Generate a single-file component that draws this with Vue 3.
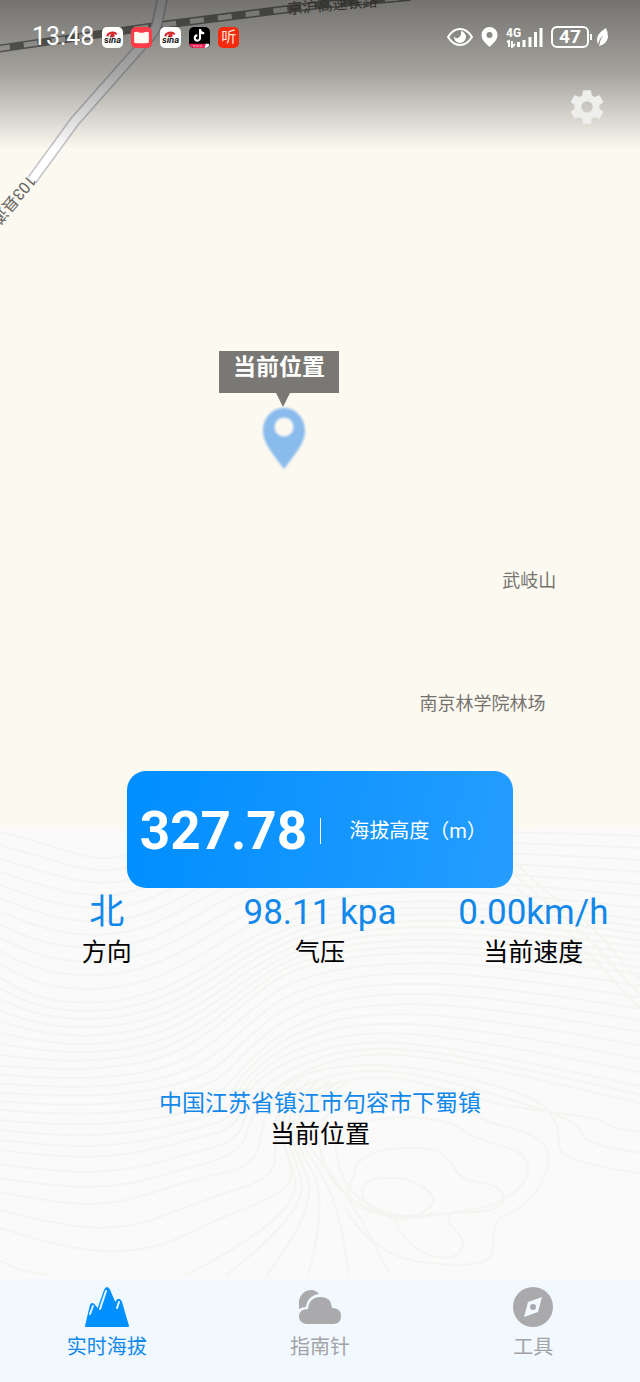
<template>
  <div class="page">
    <section class="map">
      <svg class="roads" width="640" height="240" viewBox="0 0 640 240" aria-hidden="true">
        <path class="rail" d="M-4 49 L170 24 L320 5 L410 -3" />
        <path class="rail-gap" d="M-4 49 L170 24 L320 5 L410 -3" />
        <path class="road-edge" d="M163 -4 L157 24 Q154 34 143 44 L75 121 L32 180" />
        <path class="road-fill" d="M163 -4 L157 24 Q154 34 143 44 L75 121 L32 180" />
        <text class="rail-name" transform="translate(288 14) rotate(-5)">京沪高速铁路</text>
        <text class="road-name" transform="translate(29 174) rotate(131)">103县道</text>
      </svg>

      <span class="place place-hill">武岐山</span>
      <span class="place place-farm">南京林学院林场</span>

      <div class="marker">
        <div class="callout">当前位置</div>
        <svg class="pin" width="46" height="66" viewBox="0 0 46 66" aria-hidden="true">
          <path fill-rule="evenodd" d="M23 2C11 2 2 12 2 25c0 12 9 22 21 38 12-16 21-26 21-38C44 12 35 2 23 2zm0 9.500a9.500 9.500 0 1 1 0 19 9.500 9.500 0 0 1 0-19z" />
        </svg>
      </div>

      <header class="top">
        <div class="status">
          <span class="time">13:48</span>
          <div class="apps">
            <span class="app sina">
              <svg width="21" height="21" viewBox="0 0 20 20" aria-hidden="true">
                <path d="M5 9a5 4 0 0 1 9-2" fill="none" stroke="#d8262c" stroke-width="2" />
                <circle cx="10" cy="8" r="2" fill="#d8262c" />
                <text x="10" y="15" text-anchor="middle" class="sina-name">sina</text>
              </svg>
            </span>
            <span class="app note">
              <svg width="21" height="21" viewBox="0 0 20 20" aria-hidden="true">
                <path d="M3 5q3-1 4 0 3 1 6 0 2-1 4 0v10q-7 1-14 0z" fill="#fffaf2" />
              </svg>
            </span>
            <span class="app sina">
              <svg width="21" height="21" viewBox="0 0 20 20" aria-hidden="true">
                <path d="M5 9a5 4 0 0 1 9-2" fill="none" stroke="#d8262c" stroke-width="2" />
                <circle cx="10" cy="8" r="2" fill="#d8262c" />
                <text x="10" y="15" text-anchor="middle" class="sina-name">sina</text>
              </svg>
            </span>
            <span class="app video">
              <svg width="21" height="21" viewBox="0 0 20 20" aria-hidden="true">
                <path d="M10.500 2v8.500a2.500 2.500 0 1 1-2.500-2.500M10.500 3q1 3 4 3" fill="none" stroke="#fff" stroke-width="2" />
                <path d="M0 16h17l-1 4H4q-3 0-4-4z" fill="#f0295c" />
                <path d="M4 18h9" stroke="#ffc4d4" stroke-width="1" stroke-dasharray="2 1" />
                <path d="M16 16h3v2l-2 2h-2z" fill="#fff" />
              </svg>
            </span>
            <span class="app listen">听</span>
          </div>

          <div class="signals">
            <svg width="26" height="20" viewBox="0 0 26 20" aria-hidden="true">
              <path d="M1 10Q6 2 13 2t12 8q-5 8-12 8T1 10z" fill="none" stroke="#fff" stroke-width="2" />
              <path fill="#fff" d="M14 4a6 6 0 1 1-7 5q1 3 4 2 4-2 3-7z" />
            </svg>
            <svg width="17" height="20" viewBox="0 0 17 20" aria-hidden="true">
              <path fill="#fff" fill-rule="evenodd" d="M8.500 0A8 8 0 0 0 .5 8c0 5 4 8 8 12 4-4 8-7 8-12a8 8 0 0 0-8-8zm0 5a3 3 0 1 1 0 6 3 3 0 0 1 0-6z" />
            </svg>
            <svg width="37" height="22" viewBox="0 0 37 22" aria-hidden="true">
              <text x="0" y="11" class="network">4G</text>
              <path d="M1 16l2-1v6M6 15v6l3-3" fill="none" stroke="#fff" stroke-width="2" />
              <path d="M12.500 16v5M18 14v7M24 11v10M29.500 6v15M35 2v19" stroke="#fff" stroke-width="3" />
            </svg>
            <span class="battery">47</span>
            <svg class="leaf" width="11" height="18" viewBox="0 0 11 18" aria-hidden="true">
              <path fill="#fff" d="M9 0C4 3 0 7 0 12q0 2 1 4 1-5 5-9-3 5-4 11 8-2 9-9 0-5-2-9z" />
            </svg>
          </div>
        </div>
        <button class="settings" type="button" aria-label="设置">
          <svg width="40" height="40" viewBox="0 0 24 24" aria-hidden="true">
            <path d="M19.430 12.980c.04-.32.07-.64.07-.98s-.03-.66-.07-.98l2.110-1.650c.19-.15.24-.42.12-.64l-2-3.460c-.12-.22-.39-.3-.61-.22l-2.490 1c-.52-.4-1.080-.73-1.690-.98l-.38-2.650A.49.49 0 0 0 14 2h-4c-.25 0-.46.18-.49.42l-.38 2.650c-.61.25-1.170.59-1.690.98l-2.490-1c-.23-.09-.49 0-.61.22l-2 3.460c-.13.22-.07.49.12.64l2.110 1.650c-.04.32-.07.65-.07.98s.03.66.07.98l-2.110 1.650c-.19.15-.24.42-.12.64l2 3.460c.12.22.39.3.61.22l2.490-1c.52.4 1.080.73 1.690.98l.38 2.650c.03.24.24.42.49.42h4c.25 0 .46-.18.49-.42l.38-2.650c.61-.25 1.170-.59 1.690-.98l2.490 1c.23.09.49 0 .61-.22l2-3.460c.12-.22.07-.49-.12-.64l-2.110-1.650zM12 15.500a3.500 3.500 0 1 1 0-7 3.500 3.500 0 0 1 0 7z" />
          </svg>
        </button>
      </header>
    </section>

    <main class="panel">
      <svg class="contours" viewBox="0 0 640 451" preserveAspectRatio="none" aria-hidden="true">
        <path v-for="(d, i) in contours" :key="i" :d="d" />
      </svg>

      <div class="altitude">
        <strong>327.78</strong>
        <span class="unit">海拔高度（m）</span>
      </div>

      <div class="stats">
        <div v-for="stat in stats" :key="stat.label" class="stat">
          <span class="value">{{ stat.value }}</span>
          <span class="label">{{ stat.label }}</span>
        </div>
      </div>

      <div class="address">
        <span class="address-name">中国江苏省镇江市句容市下蜀镇</span>
        <span class="label">当前位置</span>
      </div>
    </main>

    <nav class="tabs">
      <button
        v-for="tab in tabs"
        :key="tab.id"
        type="button"
        :class="{ active: activeTab === tab.id }"
        @click="activeTab = tab.id"
      >
        <svg v-if="tab.id === 'altitude'" width="46" height="42" viewBox="0 0 46 42" aria-hidden="true">
          <path class="peak" d="M2 40 L7 19 Q8 17 10 19 L14 24 L21 4 Q23 0 25 4 L31 18 L33 15 Q35 12 37 16 L44 40 Z" />
          <path class="snow" d="M9 20L6 28M22 5l-6 18M35 16l-2 6" />
        </svg>
        <svg v-else-if="tab.id === 'compass'" width="42" height="42" viewBox="0 0 42 42" aria-hidden="true">
          <path d="M0 23C-2 12 4 4 12 4q5 0 8 4C12 9 8 14 7 21q-4 0-7 2z" />
          <path d="M8 38a8 7 0 0 1-8-7q0-8 9-8 1-12 13-12 10 0 11 11 9 0 9 8t-8 8z" />
        </svg>
        <svg v-else width="40" height="42" viewBox="0 0 40 42" aria-hidden="true">
          <path fill-rule="evenodd" d="M20 1a20 20 0 1 1 0 40 20 20 0 0 1 0-40zM29 11L15 16l-4 15 14-5z" />
          <circle cx="20" cy="21" r="3" />
        </svg>
        <span>{{ tab.name }}</span>
      </button>
    </nav>
  </div>
</template>

<script setup>
import { ref } from 'vue';

const activeTab = ref('altitude');

const tabs = [
  { id: 'altitude', name: '实时海拔' },
  { id: 'compass', name: '指南针' },
  { id: 'tools', name: '工具' },
];

const stats = [
  { value: '北', label: '方向' },
  { value: '98.11 kpa', label: '气压' },
  { value: '0.00km/h', label: '当前速度' },
];

// Key contour lines, the ones in between are interpolated
const slopes = [
  [[0, 4], [40, 14], [75, 26], [105, 32], [140, 24], [170, 10], [230, -10], [330, -30], [450, -40], [640, -40]],
  [[0, 149], [29, 170], [102, 177], [163, 162], [212, 135], [260, 103], [330, 78], [420, 72], [520, 76], [640, 92]],
  [[0, 238], [45, 241], [100, 241], [160, 232], [205, 208], [245, 175], [290, 140], [380, 124], [500, 126], [640, 146]],
  [[0, 282], [50, 286], [120, 285], [180, 277], [225, 262], [245, 236], [290, 198], [360, 175], [490, 178], [640, 204]],
  [[0, 322], [60, 330], [130, 327], [190, 312], [238, 299], [245, 262], [290, 230], [370, 210], [490, 226], [640, 258]],
  [[0, 364], [60, 374], [120, 374], [180, 356], [244, 338], [256, 292], [290, 256], [370, 226], [500, 248], [640, 284]],
];
const counts = [11, 8, 5, 4, 3];

function smooth(points) {
  let d = `M${points[0][0]} ${points[0][1]}`;
  for (let i = 1; i < points.length - 1; i++) {
    const [x, y] = points[i];
    const last = i === points.length - 2;
    const endX = last ? points[i + 1][0] : (x + points[i + 1][0]) / 2;
    const endY = last ? points[i + 1][1] : (y + points[i + 1][1]) / 2;
    d += ` Q${x} ${y} ${endX} ${endY}`;
  }
  return d;
}

function between(a, b, t) {
  return a.map(([x, y], i) => [x + (b[i][0] - x) * t, y + (b[i][1] - y) * t]);
}

const contours = [];
counts.forEach((count, k) => {
  for (let n = 0; n < count; n++) {
    contours.push(smooth(between(slopes[k], slopes[k + 1], n / count)));
  }
});

// Lines that turn down into the valley
const valleyStart = [[0, 364], [60, 376], [120, 376], [190, 352], [255, 338], [262, 300], [272, 270], [300, 245], [370, 234], [450, 245], [540, 270], [560, 300], [558, 334], [640, 345]];
const valleyEnd = [[0, 400], [70, 423], [150, 424], [220, 390], [292, 362], [290, 330], [276, 300], [300, 265], [370, 246], [430, 256], [500, 278], [600, 290], [610, 300], [640, 304]];
for (let n = 0; n < 3; n++) {
  contours.push(smooth(between(valleyStart, valleyEnd, n / 2)));
}

const fanStart = [[185, 447], [240, 420], [300, 370], [290, 330], [272, 285], [300, 250]];
const fanEnd = [[390, 447], [370, 405], [335, 350], [305, 315], [300, 280], [350, 254]];
for (let n = 0; n < 6; n++) {
  contours.push(smooth(between(fanStart, fanEnd, n / 5)));
}

// East ridge beside the card
const ridgeStart = [[505, 50], [540, 80], [580, 115], [620, 160], [640, 180]];
const ridgeEnd = [[515, 35], [555, 72], [595, 100], [625, 138], [640, 152]];
for (let n = 0; n < 3; n++) {
  contours.push(smooth(between(ridgeStart, ridgeEnd, n / 2)));
}

contours.push(
  'M0 433Q24 446 50 447',
  'M362 365Q362 350 387 350C412 348 430 361 434 372Q426 389 405 389C380 387 364 379 362 365Z',
  'M352 375C340 362 356 352 355 340Q362 326 390 321C420 318 445 318 455 342C470 362 500 348 504 370C502 392 445 380 420 390Q375 390 352 375Z',
  'M318 310C325 365 360 380 398 392Q455 380 450 390C440 398 474 405 459 425C440 439 402 420 396 392',
  'M335 305C335 350 350 376 400 388Q450 388 490 378C525 365 545 334 510 320Q475 312 460 300C430 284 370 286 335 305Z',
  'M345 380C355 398 380 432 430 435C520 445 480 415 500 390Q545 370 549 330C545 295 490 305 470 282C430 260 350 266 322 292',
);
</script>

<style>
body {
  margin: 0;
}
</style>

<style scoped>
* {
  box-sizing: border-box;
}

.page {
  display: flex;
  flex-direction: column;
  min-height: 100vh;
  font-family: Roboto, "Noto Sans CJK SC", sans-serif;
  color: #000;
  background: #fafafa;
}

button {
  padding: 0;
  border: 0;
  background: none;
  font: inherit;
  cursor: pointer;
}

.map {
  position: relative;
  flex: 1;
  min-height: 480px;
  overflow: hidden;
  background: #fcf9f1;
}

.roads {
  position: absolute;
  top: 0;
  left: 0;
}

.roads path {
  fill: none;
}

.rail {
  stroke: #858583;
  stroke-width: 8;
}

.rail-gap {
  stroke: #f2f0e8;
  stroke-width: 5;
  stroke-dasharray: 14 14;
}

.road-edge {
  stroke: #c4c4c8;
  stroke-width: 11;
}

.road-fill {
  stroke: #fff;
  stroke-width: 8;
}

.rail-name,
.road-name {
  font-size: 15px;
  fill: #66645f;
}

.road-name {
  font-size: 16px;
}

.place {
  position: absolute;
  transform: translate(-50%, -50%);
  font-size: 18px;
  line-height: 24px;
  white-space: nowrap;
  color: #75736f;
}

.place-hill {
  left: 82.7%;
  top: 70.2%;
}

.place-farm {
  left: 75.4%;
  top: 85%;
}

.marker {
  position: absolute;
  left: 43.6%;
  top: 42.4%;
  display: flex;
  flex-direction: column;
  align-items: center;
  transform: translateX(-50%);
}

.callout {
  position: relative;
  height: 42px;
  padding: 0 14px;
  background: #797874;
  color: #fff;
  font-size: 23px;
  font-weight: 700;
  line-height: 34px;
}

.callout::after {
  content: "";
  position: absolute;
  top: 100%;
  left: 57px;
  border: 7px solid transparent;
  border-top: 14px solid #797874;
  border-bottom: 0;
}

.pin {
  margin: 13px 0 0 10px;
  fill: #8abbed;
  filter: blur(1px);
}

.top {
  position: relative;
  display: flex;
  flex-direction: column;
  height: 150px;
  background: linear-gradient(rgba(0, 0, 0, 0.54), rgba(0, 0, 0, 0.34) 50%, rgba(0, 0, 0, 0));
}

.status {
  display: flex;
  align-items: center;
  height: 74px;
  padding: 0 32px;
  color: #fff;
}

.time {
  font-size: 25px;
  line-height: 32px;
}

.apps {
  display: flex;
  gap: 8px;
  margin-left: 8px;
}

.app {
  display: block;
  width: 21px;
  height: 21px;
  border-radius: 5px;
  overflow: hidden;
}

.app svg {
  display: block;
}

.sina {
  background: #fff;
}

.sina-name {
  font-size: 9px;
  font-weight: 700;
  font-style: italic;
  fill: #221a1a;
}

.note {
  background: #fb3b47;
}

.video {
  background: #000;
}

.listen {
  background: #f42a0c;
  color: #ffe6dc;
  font-size: 15px;
  line-height: 20px;
  text-align: center;
}

.signals {
  display: flex;
  align-items: center;
  gap: 8px;
  margin-left: auto;
}

.network {
  font-size: 12px;
  font-weight: 700;
  fill: #fff;
}

.battery {
  position: relative;
  width: 38px;
  height: 22px;
  border: 2px solid #fff;
  border-radius: 6px;
  font-size: 19px;
  font-weight: 700;
  line-height: 18px;
  text-align: center;
}

.battery::after {
  content: "";
  position: absolute;
  top: 6px;
  left: 37px;
  width: 2px;
  height: 6px;
  background: #fff;
}

.settings {
  align-self: flex-end;
  width: 40px;
  height: 40px;
  margin: 13px 33px 0 0;
}

.settings svg {
  display: block;
  fill: #eeeeec;
}

.panel {
  position: relative;
  display: flex;
  flex-direction: column;
  align-items: center;
  padding-bottom: 129px;
  background: #fafafa;
}

.contours {
  position: absolute;
  top: 0;
  left: 0;
  width: 100%;
  height: 100%;
  fill: none;
  stroke: #f4f4f0;
  stroke-width: 2;
}

.altitude {
  position: relative;
  display: flex;
  align-items: center;
  width: 60.4%;
  min-width: 360px;
  height: 117px;
  margin-top: -57px;
  padding: 2px 0 0 13px;
  border-radius: 19px;
  background: linear-gradient(100deg, #008eff, #259dff);
  color: #fff;
}

.altitude strong {
  font-size: 53px;
  line-height: 64px;
}

.unit {
  margin-left: 13px;
  padding-left: 28px;
  border-left: 1px solid #fff;
  font-size: 20px;
  line-height: 26px;
  white-space: nowrap;
}

.stats {
  position: relative;
  display: grid;
  grid-template-columns: repeat(3, 1fr);
  width: 100%;
}

.stat,
.address {
  display: flex;
  flex-direction: column;
  align-items: center;
}

.value {
  font-size: 35px;
  line-height: 50px;
  color: #1188ea;
}

.label {
  font-size: 25px;
  line-height: 30px;
}

.address {
  position: relative;
  margin-top: 119px;
}

.address-name {
  font-size: 23px;
  line-height: 33px;
  color: #1188ea;
}

.tabs {
  display: grid;
  grid-template-columns: repeat(3, 1fr);
  height: 103px;
  background: linear-gradient(#f4f9fd, #f1f8fe 8px);
}

.tabs button {
  display: flex;
  flex-direction: column;
  align-items: center;
  gap: 7px;
  padding-top: 7px;
  color: #a3a3a7;
  font-size: 20px;
  line-height: 24px;
}

.tabs svg {
  fill: #aaaaad;
}

.tabs .active {
  color: #1188ea;
}

.tabs .peak {
  fill: #0090ff;
  stroke: #0090ff;
  stroke-width: 2;
  stroke-linejoin: round;
}

.tabs .snow {
  fill: none;
  stroke: #eaf6ff;
  stroke-width: 2;
  stroke-linecap: round;
}
</style>
